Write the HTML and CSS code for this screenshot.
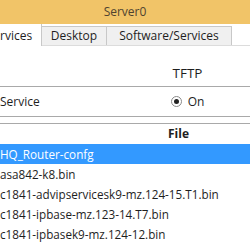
FILE: index.html
```html
<!DOCTYPE html>
<html lang="en">
<head>
    <meta charset="UTF-8">
    <title>Server0</title>
    <link rel="stylesheet" href="styles.css">
</head>
<body>
    <div class="window">
        <div class="titlebar">Server0</div>
        <div class="tabs">
            <div class="tab active">rvices</div>
            <div class="tab desktop">Desktop</div>
            <div class="tab software">Software/Services</div>
        </div>

        <div class="service-grid">
            <div class="cell head"></div>
            <div class="cell head center tftp">TFTP</div>
            <div class="cell label">Service</div>
            <div class="cell center">
                <span class="radio"><span class="dot"></span></span>
                <span>On</span>
            </div>
        </div>

        <div class="file-table">
            <div class="file-head">File</div>
            <div class="file-row selected">HQ_Router-confg</div>
            <div class="file-row">asa842-k8.bin</div>
            <div class="file-row">c1841-advipservicesk9-mz.124-15.T1.bin</div>
            <div class="file-row">c1841-ipbase-mz.123-14.T7.bin</div>
            <div class="file-row">c1841-ipbasek9-mz.124-12.bin</div>
        </div>
    </div>
</body>
</html>
```

FILE: styles.css
```css
:root {
    --title-bg: #f1c468;
    --title-text: #4f4330;
    --tab-bg: #f0f0f0;
    --tab-border: #c8c8c8;
    --line: #a9a9a9;
    --text: #1e1e1e;
    --select: #3399ff;
}

* {
    margin: 0;
    padding: 0;
    box-sizing: border-box;
}

body {
    font-family: 'Open Sans', sans-serif;
    font-size: 12px;
    color: var(--text);
    background: #fff;
    width: 250px;
    height: 250px;
    overflow: hidden;
}

.window {
    width: 250px;
    height: 250px;
    overflow: hidden;
}

.titlebar {
    height: 24px;
    line-height: 24px;
    background: var(--title-bg);
    color: var(--title-text);
    text-align: center;
    font-size: 12px;
}

.tabs {
    display: flex;
    align-items: flex-end;
    height: 22px;
    border-bottom: 1px solid #dcdcdc;
    background: #fff;
}

.tab {
    height: 19px;
    line-height: 17px;
    background: var(--tab-bg);
    border: 1px solid var(--tab-border);
    border-bottom: none;
    text-align: center;
    margin-left: -1px;
}

.tab.active {
    height: 22px;
    width: 42px;
    background: #fff;
    border-top: none;
    border-left: none;
    line-height: 24px;
    text-align: left;
    margin-left: 0;
    margin-bottom: -1px;
}

.tab.desktop {
    width: 66px;
}

.tab.software {
    width: 126px;
}

.service-grid {
    display: grid;
    grid-template-columns: 125px 125px;
}

.cell {
    display: flex;
    align-items: center;
    border-bottom: 1px solid var(--line);
}

.cell.head {
    height: 41px;
    padding-top: 14px;
}

.cell.tftp {
    font-size: 13.5px;
}

.cell.label {
    height: 30px;
}

.cell.center {
    justify-content: center;
    gap: 6px;
}

.radio {
    width: 11px;
    height: 11px;
    border: 1px solid #8a8a8a;
    border-radius: 50%;
    background: #fff;
    display: flex;
    align-items: center;
    justify-content: center;
}

.dot {
    width: 5px;
    height: 5px;
    border-radius: 50%;
    background: #222;
}

.file-table {
    margin-top: 6px;
    border-top: 1px solid var(--line);
}

.file-head {
    height: 20px;
    line-height: 20px;
    font-weight: 700;
    padding-left: 168px;
}

.file-row {
    height: 20px;
    line-height: 20px;
    white-space: nowrap;
    font-size: 11.7px;
}

.file-row.selected {
    background: var(--select);
    color: #fff;
}
```
